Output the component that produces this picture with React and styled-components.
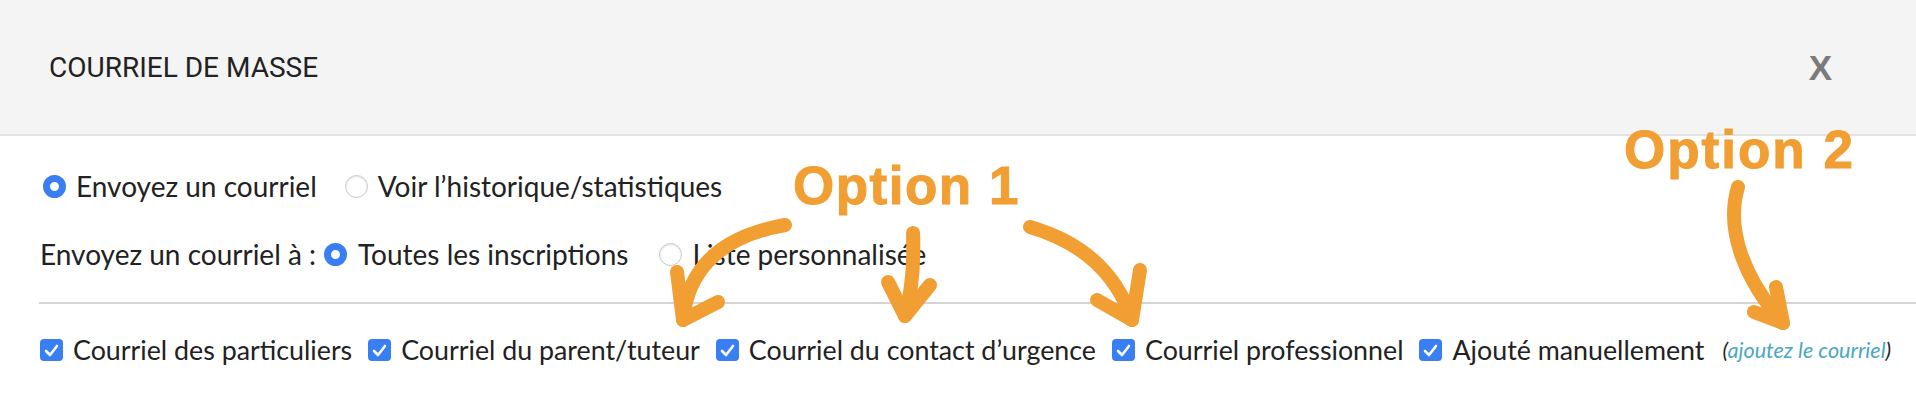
import React from 'react';
import styled, { createGlobalStyle } from 'styled-components';

const GlobalStyle = createGlobalStyle`
  html, body { margin: 0; padding: 0; background: #fff; }
  body { font-family: Lato, "Liberation Sans", sans-serif; color: #222; }
`;

const Page = styled.div`
  position: relative;
  width: 1916px;
  height: 406px;
  overflow: hidden;
  background: #fff;
`;

const Header = styled.header`
  height: 134px;
  background: #f4f4f4;
  border-bottom: 2px solid #e3e3e3;
  display: flex;
  align-items: center;
  justify-content: space-between;
  padding: 0 84px 0 49px;
`;

const Title = styled.h1`
  margin: 0;
  font-family: Roboto, "Liberation Sans", sans-serif;
  font-weight: 400;
  font-size: 28px;
  color: #222;
`;

const Close = styled.button`
  border: 0;
  background: none;
  padding: 0;
  font-family: "Liberation Sans", Arial, sans-serif;
  font-weight: 700;
  font-size: 35px;
  line-height: 1;
  color: #7b7b7b;
`;

const Body = styled.main`
  display: flex;
  flex-direction: column;
  gap: 28px;
  padding-top: 30px;
  font-size: 28px;
`;

const OptionRow = styled.div`
  display: flex;
  align-items: center;
  height: 40px;
  padding-left: ${p => p.$indent}px;
`;

const Label = styled.span`
  margin-right: 8px;
  white-space: nowrap;
`;

const Choice = styled.label`
  display: flex;
  align-items: center;
  gap: ${p => p.$gap || 10}px;
  margin-right: ${p => p.$after || 0}px;
  white-space: nowrap;
`;

const Radio = styled.span`
  display: inline-block;
  width: 23px;
  height: 23px;
  box-sizing: border-box;
  border-radius: 50%;
  background: #fff;
  border: ${p => (p.$on ? '7px solid #3a7ef3' : '1px solid #c9c9c9')};
  box-shadow: ${p => (p.$on ? 'none' : 'inset 0 1px 2px rgba(0,0,0,0.12)')};
`;

const Divider = styled.hr`
  margin: 0 0 0 39px;
  border: 0;
  height: 2px;
  background: #d4d4d4;
`;

const CheckRow = styled.div`
  display: flex;
  align-items: center;
  height: 36px;
  padding-left: 40px;
  gap: 16px;
  font-size: 26.8px;
`;

const BoxWrap = styled.span`
  display: inline-flex;
  align-items: center;
  justify-content: center;
  width: 23px;
  height: 22px;
  border-radius: 4px;
  background: #3a7ef3;
`;

const CheckChoice = styled.label`
  display: flex;
  align-items: center;
  gap: 10px;
  white-space: nowrap;
`;

const AddLink = styled.span`
  font-style: italic;
  font-size: 21.6px;
  color: #222;
  margin-left: 2px;
  white-space: nowrap;
  a { color: #4ba6c2; text-decoration: none; }
`;

const Overlay = styled.svg`
  position: absolute;
  inset: 0;
  pointer-events: none;
`;

const Note = styled.span`
  position: absolute;
  left: ${p => p.$x}px;
  top: ${p => p.$y}px;
  font-family: "Liberation Sans", Arial, sans-serif;
  font-weight: 700;
  font-size: 53px;
  line-height: 1;
  letter-spacing: ${p => p.$spacing}px;
  color: #f19e32;
  -webkit-text-stroke: 1px #f19e32;
  white-space: nowrap;
`;

const Checkbox = () => (
  <BoxWrap>
    <svg width="15" height="13" viewBox="0 0 15 13">
      <polyline points="2,7 6,11 13,2" fill="none" stroke="#fff" strokeWidth="2.6" strokeLinecap="round" strokeLinejoin="round" />
    </svg>
  </BoxWrap>
);

const checks = [
  'Courriel des particuliers',
  'Courriel du parent/tuteur',
  'Courriel du contact d’urgence',
  'Courriel professionnel',
  'Ajouté manuellement',
];

const arrows = [
  { d: 'M785,225 Q690,242 683,320', head: 'M677,272 L683,320 L718,302' },
  { d: 'M913,233 Q915,280 905,316', head: 'M888,282 L905,316 L930,285' },
  { d: 'M1030,227 Q1109,250 1132,320', head: 'M1140,270 L1132,320 L1097,300' },
  { d: 'M1738,187 C1725,230 1745,280 1783,323', head: 'M1776,287 L1783,323 L1754,312' },
];

export default function App() {
  return (
    <Page>
      <GlobalStyle />
      <Header>
        <Title>COURRIEL DE MASSE</Title>
        <Close>X</Close>
      </Header>
      <Body>
        <OptionRow $indent={43}>
          <Choice $after={28}>
            <Radio $on />
            Envoyez un courriel
          </Choice>
          <Choice>
            <Radio />
            Voir l’historique/statistiques
          </Choice>
        </OptionRow>
        <OptionRow $indent={40}>
          <Label>Envoyez un courriel à :</Label>
          <Choice $gap={11} $after={31}>
            <Radio $on />
            Toutes les inscriptions
          </Choice>
          <Choice>
            <Radio />
            Liste personnalisée
          </Choice>
        </OptionRow>
        <Divider />
        <CheckRow>
          {checks.map(c => (
            <CheckChoice key={c}>
              <Checkbox />
              {c}
            </CheckChoice>
          ))}
          <AddLink>
            (<a href="#">ajoutez le courriel</a>)
          </AddLink>
        </CheckRow>
      </Body>
      <Overlay width="1916" height="406" viewBox="0 0 1916 406">
        {arrows.map((a, i) => (
          <g key={i} fill="none" stroke="#f19e32" strokeWidth="14" strokeLinecap="round" strokeLinejoin="round">
            <path d={a.d} />
            <path d={a.head} />
          </g>
        ))}
      </Overlay>
      <Note $x={793} $y={159} $spacing={1.5}>Option 1</Note>
      <Note $x={1624} $y={123} $spacing={2}>Option 2</Note>
    </Page>
  );
}
